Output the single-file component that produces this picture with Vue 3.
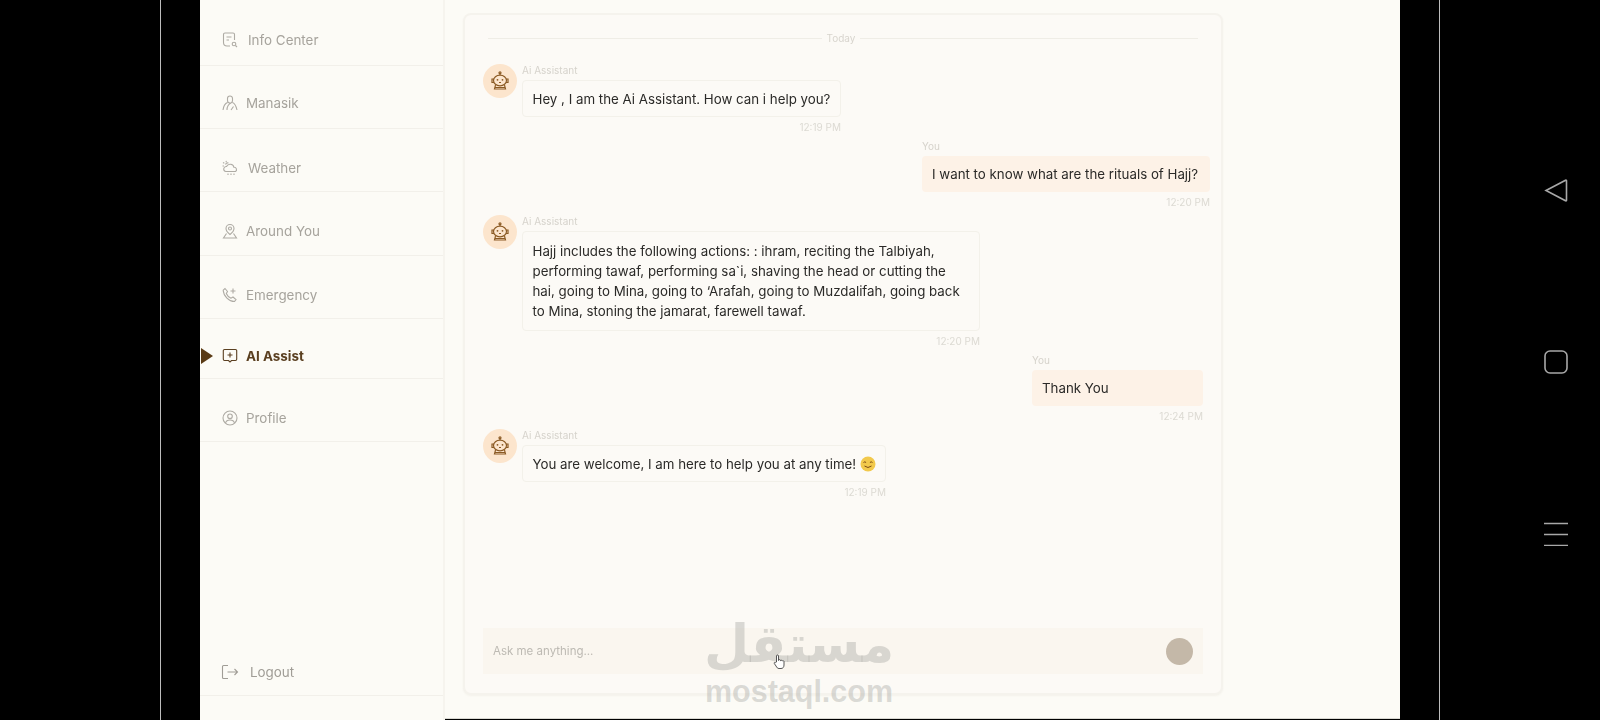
<template>
  <div class="screen">
    <div class="bezel bezel-left"><span class="edge"></span></div>

    <aside class="sidebar">
      <nav class="nav">
        <a
          v-for="item in navItems"
          :key="item.label"
          class="nav-item"
          :class="{ active: item.active, wide: item.wide }"
          :style="{ height: item.height + 'px', paddingTop: item.top + 'px' }"
        >
          <svg v-if="item.active" class="marker" viewBox="0 0 12 16"><path d="M0 0l12 8-12 8z" /></svg>
          <svg class="nav-icon" viewBox="0 0 16 16" v-html="item.icon"></svg>
          <span>{{ item.label }}</span>
        </a>
      </nav>
      <a class="nav-item logout">
        <svg class="nav-icon" viewBox="0 0 18 16">
          <path d="M7 1.500H2.500A1 1 0 0 0 1.500 2.500v11a1 1 0 0 0 1 1H7M6.500 8h10M13.500 5l3 3-3 3" />
        </svg>
        <span>Logout</span>
      </a>
    </aside>

    <main class="main">
      <section class="chat">
        <div class="day"><span>Today</span></div>

        <div v-for="msg in messages" :key="msg.time + msg.text" class="msg" :class="msg.self ? 'msg-self' : ''" :style="msg.self ? { marginRight: msg.right + 'px' } : {}">
          <div v-if="!msg.self" class="avatar">
            <svg viewBox="0 0 20 20">
              <circle cx="10" cy="1.800" r="1" />
              <path d="M10 2.800v1.400M3.500 9.500a6.500 5.300 0 0 1 13 0 6.500 5.300 0 0 1-13 0zM3.500 8H2v3.500h1.500M16.500 8H18v3.500h-1.500M5.500 14.200L4.500 18h11l-1-3.800M4.500 16.500h11" />
              <circle class="eye" cx="7.500" cy="8.800" r=".9" />
              <circle class="eye" cx="12.500" cy="8.800" r=".9" />
              <path d="M9 11.500h2" />
            </svg>
          </div>
          <div class="msg-body" :style="{ width: msg.width + 'px' }">
            <div class="name">{{ msg.self ? 'You' : 'Ai Assistant' }}</div>
            <div class="bubble" :class="{ 'bubble-self': msg.self, 'bubble-long': msg.long }">
              {{ msg.text }}<svg v-if="msg.emoji" class="emoji" viewBox="0 0 16 16">
                <circle cx="8" cy="8" r="7.500" fill="#f2c94c" />
                <path d="M3.500 6.500q1.300-1.300 2.600 0M9.900 6.500q1.300-1.300 2.600 0M4.500 10q3.500 3 7 0" fill="none" stroke="#7a4a16" stroke-width="1" />
              </svg>
            </div>
            <div class="time">{{ msg.time }}</div>
          </div>
        </div>

        <div class="composer">
          <span class="placeholder">Ask me anything...</span>
          <span class="send"></span>
        </div>
      </section>

      <div class="watermark">
        <div class="wm-ar">مستقل</div>
        <div class="wm-en">mostaql.com</div>
      </div>
      <svg class="cursor" viewBox="0 0 12 16">
        <path d="M3.500 8V2a1 1 0 0 1 2 0v4.500a1 1 0 0 1 2 .2 1 1 0 0 1 1.800.3 1 1 0 0 1 1.700.5v3.500c0 2-1 3.500-3 3.500H6c-1.500 0-2-.8-3-2.500L1.300 9.500c-.5-1 .8-1.800 1.500-.8z" />
      </svg>
    </main>

    <div class="bezel bezel-right">
      <span class="edge"></span>
      <div class="softkeys">
        <svg viewBox="0 0 24 24"><path d="M2 12.500L21.500 2.300a.6.6 0 0 1 1 .5v19.400a.6.6 0 0 1-1 .5z" /></svg>
        <svg viewBox="0 0 24 24"><rect x="1" y="1" width="22" height="22" rx="5" /></svg>
        <svg viewBox="0 0 24 24"><path d="M0 1.500h24M0 12.500h24M0 23.500h24" /></svg>
      </div>
    </div>
  </div>
</template>

<script setup>
const navItems = [
  {
    label: 'Info Center',
    height: 66,
    top: 14,
    wide: true,
    icon: '<path d="M12.500 8V2.500a1.500 1.500 0 0 0-1.500-1.500H3A1.500 1.500 0 0 0 1.500 2.500v8A3.500 3.500 0 0 0 5 14h3M4.500 5h5M4.500 8h2.500" /><circle cx="12" cy="12" r="1.800" /><path d="M13.500 13.500l1.500 1.500" />'
  },
  {
    label: 'Manasik',
    height: 63,
    top: 11,
    icon: '<path d="M5.500 3.500a2.500 2.500 0 0 1 5 0v2a2.500 2.500 0 0 1-5 0zM5.500 7.500C3 8.500 1.500 11 1 15M10.500 7.500c2 .8 3.500 3 4.500 7.500M5 15c0-3 1-5.500 4-7M9 15l2.500-3.500" />'
  },
  {
    label: 'Weather',
    height: 63,
    top: 15,
    wide: true,
    icon: '<path d="M4 11.500a2.500 2.500 0 0 1 .5-5 4 4 0 0 1 7.500 .8 2.300 2.300 0 0 1 1.500 4.200zM3.500 4.500a2.500 2.500 0 0 1 3-1.500M4 .8l.4 1.400M1 2.500l1.300.8M.5 6h1.500M6 13.500v1.500M9 13.500v1.500M12 13.500v1.500" />'
  },
  {
    label: 'Around You',
    height: 64,
    top: 14,
    icon: '<path d="M8 11.500C5.500 9.500 4 7.800 4 5.500a4 4 0 0 1 8 0c0 2.300-1.500 4-4 6z" /><circle cx="8" cy="5.500" r="1.500" /><path d="M4.500 10.500L1.500 15h13l-3-4.500" />'
  },
  {
    label: 'Emergency',
    height: 63,
    top: 15,
    icon: '<path d="M3 1.500l2.500 3-1.200 2c.8 2 2.500 3.700 4.700 4.700l2-1.200 3 2.500-1.500 2C7 14.500 1.500 9 1.200 3.200zM11 1.500v5M8.500 4h5" />'
  },
  {
    label: 'AI Assist',
    height: 60,
    top: 15,
    active: true,
    icon: '<path d="M2.500 1.500h11a1.200 1.200 0 0 1 1.200 1.200v8.600a1.200 1.200 0 0 1-1.200 1.200H9.500L8 14l-1.500-1.500h-4a1.200 1.200 0 0 1-1.200-1.200V2.700a1.200 1.200 0 0 1 1.200-1.200zM8 4.500v5M5.500 7h5" />'
  },
  {
    label: 'Profile',
    height: 63,
    top: 15,
    icon: '<circle cx="8" cy="8" r="7" /><circle cx="8" cy="6.300" r="2.300" /><path d="M3.500 13c.5-2 2.300-3 4.500-3s4 1 4.500 3" />'
  }
]

const messages = [
  { text: 'Hey , I am the Ai Assistant. How can i help you?', time: '12:19 PM', width: 319 },
  { text: 'I want to know what are the rituals of Hajj?', time: '12:20 PM', width: 288, self: true, right: 11 },
  {
    text: "Hajj includes the following actions: : ihram, reciting the Talbiyah, performing tawaf, performing sa`i, shaving the head or cutting the hai, going to Mina, going to ‘Arafah, going to Muzdalifah, going back to Mina, stoning the jamarat, farewell tawaf.",
    time: '12:20 PM',
    width: 458,
    long: true
  },
  { text: 'Thank You', time: '12:24 PM', width: 171, self: true, right: 18 },
  { text: 'You are welcome, I am here to help you at any time! ', time: '12:19 PM', width: 364, emoji: true }
]
</script>

<style>
html, body {
  margin: 0;
  background: #000;
}
</style>

<style scoped>
.screen {
  display: flex;
  width: 1600px;
  height: 720px;
  overflow: hidden;
  background: #000;
  font-family: Inter, "Liberation Sans", sans-serif;
}

.bezel {
  position: relative;
  flex: 0 0 200px;
  background: #000;
}

.edge {
  position: absolute;
  top: 0;
  bottom: 0;
  width: 1px;
  background: #bdbdbd;
}

.bezel-left .edge {
  left: 160px;
}

.bezel-right .edge {
  left: 39px;
}

.softkeys {
  position: absolute;
  left: 144px;
  top: 178px;
  display: flex;
  flex-direction: column;
  gap: 148px;
}

.softkeys svg {
  display: block;
  width: 24px;
  height: 24px;
  fill: none;
  stroke: #a8a8a8;
  stroke-width: 1.6;
}

.sidebar {
  display: flex;
  flex: 0 0 245px;
  flex-direction: column;
  box-sizing: border-box;
  padding-bottom: 24px;
  background: #fcfbf6;
  border-right: 2px solid #f6f4ee;
  filter: blur(0.35px);
}

.nav {
  flex: 1;
}

.nav-item {
  position: relative;
  display: flex;
  align-items: center;
  gap: 8px;
  box-sizing: border-box;
  padding-left: 22px;
  border-bottom: 1px solid #f2f0ea;
  color: #a6a39c;
  font-size: 13.4px;
}

.nav-item.wide {
  gap: 10px;
}

.nav-item.active {
  color: #5a3f20;
  font-weight: 700;
}

.nav-icon {
  width: 16px;
  height: 16px;
  flex: none;
  fill: none;
  stroke: #aeaba4;
  stroke-width: 1.1;
}

.active .nav-icon {
  stroke: #5a3f20;
}

.marker {
  position: absolute;
  left: 1px;
  top: 29px;
  width: 12px;
  height: 16px;
  fill: #5a3a14;
}

.logout {
  height: 62px;
  gap: 11px;
  padding-left: 21px;
  padding-top: 14px;
  color: #a09d96;
}

.logout .nav-icon {
  width: 18px;
  stroke: #a09d96;
}

.main {
  position: relative;
  flex: 1;
  box-sizing: border-box;
  height: 719px;
  padding: 13px 0 25px 18px;
  background: #fcfbf6;
  border-bottom: 1px solid #d9d8d2;
}

.chat {
  display: flex;
  flex-direction: column;
  box-sizing: border-box;
  width: 760px;
  height: 682px;
  padding: 0 0 19px 18px;
  background: #fcfaf6;
  border: 2px solid #f5f3ed;
  border-radius: 8px;
  box-shadow: 0 1px 2px rgba(90, 70, 40, 0.05);
  filter: blur(0.35px);
}

.day {
  display: flex;
  align-items: center;
  gap: 5px;
  height: 14px;
  margin: 16px 23px 19px 5px;
  color: #d8d5ce;
  font-size: 10px;
}

.day::before,
.day::after {
  content: "";
  height: 1px;
  background: #efede6;
}

.day span {
  flex: none;
}

.day::before {
  flex: 335;
}

.day::after {
  flex: 339;
}

.msg {
  display: flex;
  gap: 5px;
  margin-bottom: 7px;
}

.msg-self {
  justify-content: flex-end;
}

.avatar {
  display: flex;
  align-items: center;
  justify-content: center;
  flex: none;
  width: 34px;
  height: 34px;
  border-radius: 50%;
  background: #fce5cd;
}

.avatar svg {
  width: 20px;
  height: 20px;
  fill: none;
  stroke: #8b5a24;
  stroke-width: 1.2;
}

.avatar .eye {
  fill: #8b5a24;
  stroke: none;
}

.name {
  height: 12px;
  margin-bottom: 4px;
  color: #d6d3cc;
  font-size: 10px;
  line-height: 12px;
}

.bubble {
  box-sizing: border-box;
  padding: 7.500px 6px 7.500px 9.500px;
  border: 1px solid #f3f1ea;
  border-radius: 4px;
  background: #fcfaf6;
  color: #2b2a28;
  font-size: 13.3px;
  line-height: 20px;
}

.bubble-long {
  padding: 9px 8px 9px 9.500px;
}

.bubble-self {
  padding: 8px 6px 8px 10px;
  border: 0;
  background: #fdf2e7;
}

.emoji {
  width: 16px;
  height: 16px;
  vertical-align: -3px;
}

.time {
  height: 12px;
  margin-top: 4px;
  color: #dcdad3;
  font-size: 10px;
  line-height: 12px;
  text-align: right;
}

.composer {
  display: flex;
  align-items: center;
  justify-content: space-between;
  box-sizing: border-box;
  width: 720px;
  height: 46px;
  margin-top: auto;
  padding: 0 10px;
  background: #faf6ef;
}

.placeholder {
  color: #bdbab3;
  font-size: 11.5px;
}

.send {
  width: 27px;
  height: 27px;
  border-radius: 50%;
  background: #c4b8a8;
}

.watermark {
  position: absolute;
  left: 254px;
  top: 612px;
  width: 200px;
  color: rgba(170, 170, 165, 0.42);
  text-align: center;
  font-family: "DejaVu Sans", sans-serif;
  font-weight: 700;
}

.wm-ar {
  height: 64px;
  font-size: 52px;
  line-height: 64px;
}

.wm-en {
  height: 30px;
  font-family: "Liberation Sans", sans-serif;
  font-size: 30.5px;
  line-height: 30px;
}

.cursor {
  position: absolute;
  left: 328px;
  top: 654px;
  width: 12px;
  height: 16px;
  fill: #fff;
  stroke: #444;
  stroke-width: 0.9;
}
</style>
